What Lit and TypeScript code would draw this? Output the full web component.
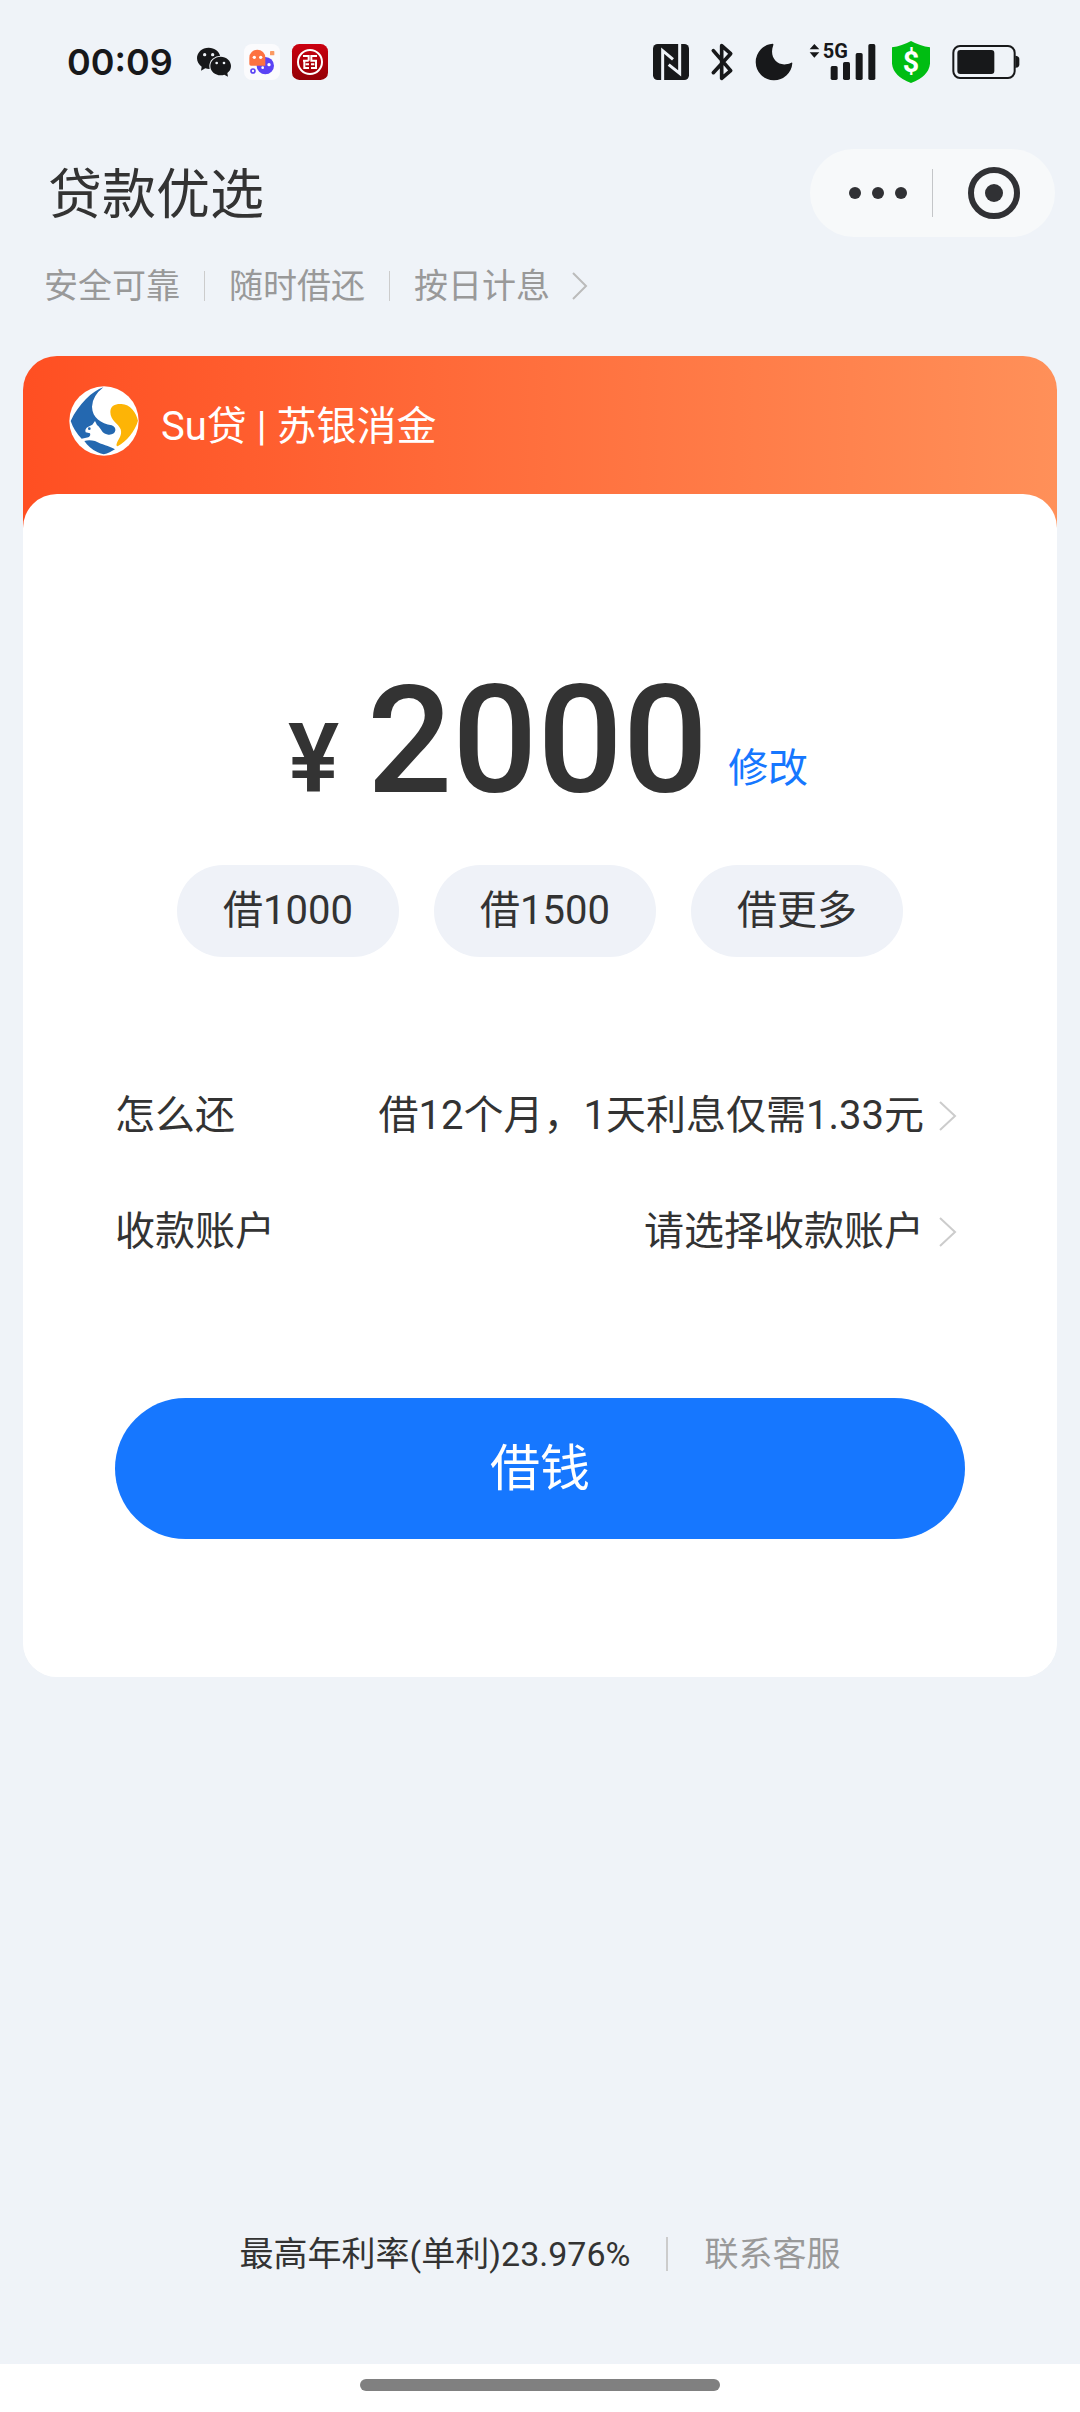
import { LitElement, html, css, svg } from "lit";
import { customElement, property } from "lit/decorators.js";

const INK = "#17181a";
const PAGE = "#eff3f8";

@customElement("status-bar")
class StatusBar extends LitElement {
  static styles = css`
    :host {
      display: flex;
      justify-content: space-between;
      align-items: center;
      height: 124px;
      padding: 0 60px 0 67px;
      color: #17181a;
    }
    .side {
      display: flex;
      align-items: center;
    }
    .time {
      font: 600 36px/44px Inter, "Liberation Sans", sans-serif;
      margin-right: 23px;
    }
    .apps {
      display: flex;
      align-items: center;
      gap: 12px;
    }
    .system {
      display: flex;
      align-items: center;
      gap: 22px;
    }
    .signal {
      margin: 0 -6px;
    }
    svg {
      display: block;
      flex: none;
      overflow: visible;
    }
    .net {
      font: 700 60px Roboto, "Liberation Sans", sans-serif;
    }
    .coin {
      font: 700 86px Roboto, "Liberation Sans", sans-serif;
    }
  `;

  render() {
    return html`
      <div class="side">
        <span class="time">00:09</span>
        <div class="apps">
          <svg width="36" height="36" viewBox="468 72 108 108" aria-hidden="true">
            <path fill=${INK} d="M506 83C486 83 471 97 471 115C471 126 477 134 485 140L483 152L496 145Q502 147 508 147L541 110C538 94 524 83 506 83Z" />
            <ellipse cx="542" cy="138" rx="34" ry="31" fill=${PAGE} />
            <path fill=${INK} d="M542 110C524 110 511 123 511 138C511 154 525 166 542 166Q548 166 553 164L564 170L562 159C569 154 573 147 573 138C573 122 559 110 542 110Z" />
            <g fill=${PAGE}>
              <circle cx="494" cy="104" r="5" /><circle cx="518" cy="104" r="5" />
              <circle cx="530" cy="129" r="4" /><circle cx="552" cy="129" r="4" />
            </g>
          </svg>
          <svg width="36" height="36" viewBox="0 0 108 108" aria-hidden="true">
            <rect width="108" height="108" rx="24" fill="#fbfbfd" />
            <circle cx="64" cy="65" r="26" fill="#5b43f5" />
            <path fill="#fd7241" d="M16 41A24 24 0 0 1 64 41V65H21Q16 65 16 60Z" />
            <rect x="78" y="21" width="13" height="13" rx="2" fill="#fb9a63" />
            <circle cx="27" cy="81" r="6" fill="none" stroke="#5b43f5" stroke-width="5" />
            <g fill="#fff">
              <circle cx="31" cy="40" r="5" /><circle cx="50" cy="40" r="5" />
              <circle cx="75" cy="62" r="5" /><circle cx="56" cy="71" r="4" />
            </g>
          </svg>
          <svg width="36" height="36" viewBox="0 0 108 108" aria-hidden="true">
            <defs>
              <linearGradient id="red" x1="0" y1="0" x2="0" y2="1">
                <stop stop-color="#cb0010" /><stop offset="1" stop-color="#940006" />
              </linearGradient>
            </defs>
            <rect width="108" height="108" rx="22" fill="url(#red)" />
            <g fill="none" stroke="#fff">
              <circle cx="54" cy="54" r="36" stroke-width="6" />
              <path stroke-width="6" d="M33 36H50V50M33 50H50M37 50V72H51M75 36H58V50H72V72H57M41 61H51M57 61H67" />
            </g>
          </svg>
        </div>
      </div>
      <div class="system">
        <svg width="36" height="36" viewBox="0 0 108 108" aria-hidden="true">
          <rect width="108" height="108" rx="14" fill=${INK} />
          <path fill="none" stroke=${PAGE} stroke-width="9" d="M29 108V20L60 46M80 0V88L47 62" />
        </svg>
        <svg width="22" height="38" viewBox="241 69 66 114" aria-hidden="true">
          <path fill="none" stroke=${INK} stroke-width="11" stroke-linejoin="round" stroke-linecap="round" d="M248 92L300 152L273 175V77L300 101L248 158" />
        </svg>
        <svg width="38" height="38" viewBox="377 69 114 114" aria-hidden="true">
          <path fill=${INK} d="M430 71A55 55 0 1 0 489 130Q489 126 484 129C448 145 417 114 432 75Q433 71 430 71Z" />
        </svg>
        <svg class="signal" width="67" height="38" viewBox="539 69 201 114" aria-hidden="true">
          <path fill=${INK} d="M541 88L555 72L570 88ZM541 97H570L555 113Z" />
          <text class="net" x="580" y="115" fill=${INK}>5G</text>
          <g fill=${INK}>
            <rect x="604" y="138" width="21" height="42" rx="5" />
            <rect x="641" y="126" width="21" height="54" rx="5" />
            <rect x="679" y="99" width="21" height="81" rx="5" />
            <rect x="717" y="72" width="21" height="108" rx="5" />
          </g>
        </svg>
        <svg width="38" height="42" viewBox="786 62 114 126" aria-hidden="true">
          <path fill="#00bd12" d="M843 62Q870 77 900 81V130Q896 168 843 188Q790 168 786 130V81Q816 77 843 62Z" />
          <text class="coin" x="843" y="155" text-anchor="middle" fill="#fff">$</text>
        </svg>
        <svg width="68" height="36" viewBox="968 75 204 108" aria-hidden="true">
          <rect x="972" y="81" width="184" height="96" rx="20" fill="none" stroke=${INK} stroke-width="6" />
          <rect x="984" y="93" width="111" height="72" rx="9" fill=${INK} />
          <path fill=${INK} d="M1158 110Q1170 112 1170 120V137Q1170 145 1158 147Z" />
        </svg>
      </div>
    `;
  }
}

@customElement("setting-row")
class SettingRow extends LitElement {
  @property() label = "";
  @property() value = "";

  static styles = css`
    :host {
      display: block;
    }
    .row {
      display: flex;
      justify-content: space-between;
      align-items: center;
      width: 100%;
      height: 116px;
      margin: 0;
      padding: 0 8px 0 0;
      border: 0;
      background: none;
      color: #333;
      font: inherit;
      text-align: left;
    }
    .value {
      display: flex;
      align-items: center;
      gap: 15px;
    }
  `;

  render() {
    return html`
      <button class="row" type="button">
        <span>${this.label}</span>
        <span class="value">
          ${this.value}
          <svg width="18" height="30" viewBox="0 0 18 30" fill="none" stroke="#ccc" stroke-width="2" aria-hidden="true">
            <path d="M1 1L16 15L1 29" />
          </svg>
        </span>
      </button>
    `;
  }
}

const brandLogo = svg`
  <circle cx="105" cy="105" r="104" fill="#fff" />
  <path fill="#2468b0" d="M103 4C70 15 28 55 5 105Q15 135 38 158L58 154Q66 150 63 142L50 139Q46 128 58 122L70 116L78 105L84 117C100 130 96 142 118 146C142 148 146 124 128 118C96 112 70 96 69 62Q70 30 103 4Z" />
  <path fill="#2468b0" d="M46 165Q60 160 78 165C100 177 118 178 138 190L122 199Q105 210 86 199C68 190 55 178 46 165Z" />
  <path fill="#fdb406" d="M124 78C124 58 140 53 157 54C184 55 202 80 207 104C198 136 172 166 146 181Q140 180 144 170C150 158 160 146 155 130C148 112 124 104 124 78Z" />
  <circle cx="61" cy="128" r="4" fill="#2468b0" />
`;

@customElement("app-root")
class AppRoot extends LitElement {
  static styles = css`
    :host {
      display: flex;
      flex-direction: column;
      min-height: 100vh;
      background: #eff3f8;
      color: #333;
      font: 400 40px/60px Roboto, "Noto Sans CJK SC", sans-serif;
    }
    button {
      margin: 0;
      padding: 0;
      border: 0;
      background: none;
      color: inherit;
      font: inherit;
    }
    a {
      color: inherit;
      text-decoration: none;
    }
    svg {
      display: block;
      flex: none;
    }
    .top {
      display: flex;
      justify-content: space-between;
      align-items: center;
      padding: 25px 25px 0 48px;
    }
    .title {
      margin: 0;
      padding-top: 6px;
      font-size: 54px;
      font-weight: 400;
      line-height: 80px;
    }
    .capsule {
      display: flex;
      align-items: center;
      height: 88px;
      border-radius: 44px;
      background: #f7f9fa;
    }
    .tool {
      display: flex;
      justify-content: center;
      align-items: center;
      width: 122px;
      height: 88px;
    }
    .more {
      padding-left: 14px;
    }
    .split {
      width: 1px;
      height: 48px;
      background: #c4c6c8;
    }
    .perks {
      display: flex;
      align-items: center;
      height: 50px;
      margin: 24px 0 45px;
      padding: 0 44px;
      gap: 24px;
      color: #999;
      font-size: 34px;
    }
    .bar {
      width: 1px;
      height: 30px;
      background: #ccc;
    }
    .last {
      display: flex;
      align-items: center;
      gap: 22px;
    }
    .card {
      margin: 0 23px;
      border-radius: 34px;
      background: linear-gradient(90deg, #ff4f22, #ff9059) top / 100% 200px no-repeat, #fff;
      overflow: hidden;
    }
    .brand {
      display: flex;
      align-items: center;
      gap: 22px;
      height: 138px;
      padding: 0 46px;
      color: #fff;
    }
    .name {
      padding-top: 4px;
    }
    .logo {
      margin-bottom: 9px;
    }
    .panel {
      padding: 157px 92px 138px;
      border-radius: 34px;
      background: #fff;
    }
    .amount {
      display: flex;
      justify-content: center;
      align-items: baseline;
      padding-left: 16px;
    }
    .yen {
      margin-right: 28px;
      font-size: 96px;
      font-weight: 600;
    }
    .sum {
      font-size: 150px;
      font-weight: 500;
      line-height: 180px;
    }
    .edit {
      align-self: flex-end;
      margin: 0 0 32px 20px;
      color: #1677ff;
    }
    .chips {
      display: flex;
      justify-content: center;
      gap: 35px;
      margin: 34px 0 101px;
    }
    .chip {
      height: 92px;
      padding: 0 46px;
      border-radius: 46px;
      background: #eff2f8;
    }
    .submit {
      width: 100%;
      height: 141px;
      margin-top: 108px;
      border-radius: 71px;
      background: #1677ff;
      color: #fff;
      font-size: 50px;
    }
    .foot {
      display: flex;
      justify-content: center;
      align-items: center;
      gap: 36px;
      margin-top: auto;
      padding: 60px 0 85px;
      font-size: 34px;
      line-height: 50px;
    }
    .foot .bar {
      width: 2px;
      height: 34px;
    }
    .help {
      color: #999;
    }
    .home {
      display: flex;
      justify-content: center;
      align-items: center;
      height: 48px;
      background: #fff;
    }
    .grip {
      width: 33.333%;
      height: 12px;
      margin-bottom: 6px;
      border-radius: 6px;
      background: #808080;
    }
  `;

  private chips = ["借1000", "借1500", "借更多"];

  render() {
    return html`
      <status-bar></status-bar>
      <header class="top">
        <h1 class="title">贷款优选</h1>
        <div class="capsule">
          <button class="tool more" type="button" aria-label="更多">
            <svg width="58" height="12" viewBox="0 0 58 12" fill="#303134">
              <circle cx="6" cy="6" r="6" /><circle cx="29" cy="6" r="6" /><circle cx="52" cy="6" r="6" />
            </svg>
          </button>
          <span class="split"></span>
          <button class="tool" type="button" aria-label="关闭">
            <svg width="52" height="52" viewBox="0 0 52 52">
              <circle cx="26" cy="26" r="23" fill="none" stroke="#303134" stroke-width="6" />
              <circle cx="26" cy="26" r="9" fill="#303134" />
            </svg>
          </button>
        </div>
      </header>
      <div class="perks">
        <span>安全可靠</span>
        <span class="bar"></span>
        <span>随时借还</span>
        <span class="bar"></span>
        <a class="last" href="#perks">
          按日计息
          <svg width="16" height="28" viewBox="0 0 16 28" fill="none" stroke="#bbb" stroke-width="2" aria-hidden="true">
            <path d="M1 1L14 14L1 27" />
          </svg>
        </a>
      </div>
      <main class="card">
        <div class="brand">
          <svg class="logo" width="70" height="70" viewBox="0 0 210 210" aria-hidden="true">${brandLogo}</svg>
          <span class="name">Su贷 | 苏银消金</span>
        </div>
        <div class="panel">
          <div class="amount">
            <span class="yen">¥</span>
            <span class="sum">2000</span>
            <button class="edit" type="button">修改</button>
          </div>
          <div class="chips">
            ${this.chips.map((c) => html`<button class="chip" type="button">${c}</button>`)}
          </div>
          <setting-row label="怎么还" value="借12个月，1天利息仅需1.33元"></setting-row>
          <setting-row label="收款账户" value="请选择收款账户"></setting-row>
          <button class="submit" type="button">借钱</button>
        </div>
      </main>
      <footer class="foot">
        <span>最高年利率(单利)23.976%</span>
        <span class="bar"></span>
        <a class="help" href="#service">联系客服</a>
      </footer>
      <div class="home"><span class="grip"></span></div>
    `;
  }
}
